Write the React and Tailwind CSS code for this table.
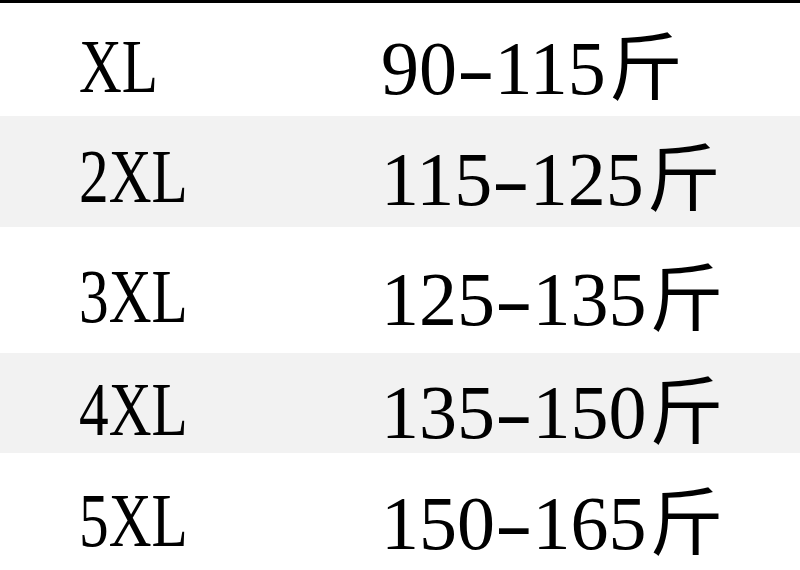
import React from "react";

const rows = [
  { size: "XL", from: "90", to: "115", cls: "h-[113px] pt-[12px] bg-white" },
  { size: "2XL", from: "115", to: "125", cls: "h-[111px] pt-[9px] bg-[#f2f2f2]" },
  { size: "3XL", from: "125", to: "135", cls: "h-[126px] pt-[12px] bg-white" },
  { size: "4XL", from: "135", to: "150", cls: "h-[100px] pt-[12px] bg-[#f2f2f2]" },
  { size: "5XL", from: "150", to: "165", cls: "h-[117px] pt-[17px] bg-white" },
];

export default function App() {
  return (
    <div className="w-[800px] h-[570px] overflow-hidden bg-white text-black leading-none">
      <div className="h-[3px] bg-black" />
      {rows.map((r) => (
        <div key={r.size} className={`flex items-center font-['Liberation_Serif'] text-[76px] ${r.cls}`}>
          <div className="w-[381px] shrink-0 pl-[79px]">
            <div className="origin-left scale-x-[0.78]">{r.size}</div>
          </div>
          <div className="flex items-baseline whitespace-nowrap">
            {r.from}
            <span className="inline-block w-[37.5px] text-center scale-x-150">-</span>
            {r.to}
            <span className="ml-[3px] font-['Noto_Sans_CJK_SC'] text-[74px]">斤</span>
          </div>
        </div>
      ))}
    </div>
  );
}
